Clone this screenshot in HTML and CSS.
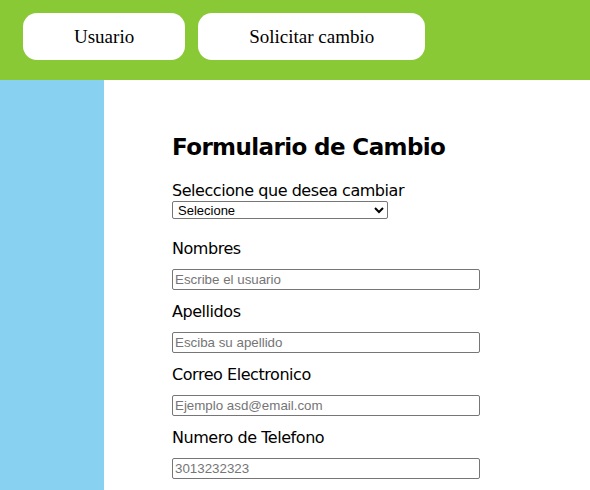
FILE: index.html
```html
<!DOCTYPE html>
<html lang="es">
<head>
<meta charset="utf-8">
<title>Formulario de Cambio</title>
<link rel="stylesheet" href="styles.css">
</head>
<body>
<header class="topbar">
  <a class="navbtn" href="#">Usuario</a>
  <a class="navbtn" href="#">Solicitar cambio</a>
</header>
<div class="layout">
  <aside class="sidebar"></aside>
  <main class="content">
    <h1 class="title">Formulario de Cambio</h1>
    <form class="form">
      <label class="label label-first" for="tipo">Seleccione que desea cambiar</label>
      <select class="select" id="tipo">
        <option>Selecione</option>
      </select>
      <label class="label" for="nom">Nombres</label>
      <input class="field" id="nom" type="text" placeholder="Escribe el usuario">
      <label class="label" for="ape">Apellidos</label>
      <input class="field" id="ape" type="text" placeholder="Esciba su apellido">
      <label class="label" for="mail">Correo Electronico</label>
      <input class="field" id="mail" type="email" placeholder="Ejemplo asd@email.com">
      <label class="label" for="tel">Numero de Telefono</label>
      <input class="field" id="tel" type="text" placeholder="3013232323">
    </form>
  </main>
</div>
</body>
</html>
```
FILE: styles.css
```css
html, body {
  margin: 0;
  padding: 0;
  height: 100%;
}
body {
  font-family: "DejaVu Sans", sans-serif;
  background: #ffffff;
  color: #000;
  display: flex;
  flex-direction: column;
}
.topbar {
  background: #8ac936;
  height: 80px;
  box-sizing: border-box;
  padding: 13px 23px 0;
  display: flex;
  align-items: flex-start;
  gap: 13px;
  flex-shrink: 0;
}
.navbtn {
  display: flex;
  align-items: center;
  justify-content: center;
  height: 47px;
  padding: 0 51px;
  background: #ffffff;
  border-radius: 14px;
  color: #000;
  text-decoration: none;
  font-family: "Liberation Serif", serif;
  font-size: 19px;
}
.layout {
  flex: 1;
  display: flex;
}
.sidebar {
  width: 104px;
  background: #89d1f1;
  flex-shrink: 0;
}
.content {
  flex: 1;
  padding: 53px 0 0 68px;
}
.title {
  margin: 0;
  font-size: 23px;
  letter-spacing: -0.6px;
  font-weight: bold;
  line-height: 28px;
}
.form {
  display: flex;
  flex-direction: column;
  align-items: flex-start;
}
.label {
  font-size: 16px;
  letter-spacing: -0.45px;
  line-height: 19px;
  margin-top: 12px;
}
.label-first {
  margin-top: 20px;
}
.select {
  width: 216px;
  height: 18px;
  box-sizing: border-box;
  font-family: "Liberation Sans", sans-serif;
  font-size: 13px;
  border: 1px solid #767676;
  border-radius: 2px;
  padding: 0 0 0 1px;
  margin: 1px 0 8px;
  background: #fff;
  color: #000;
}
.field {
  width: 308px;
  height: 21px;
  box-sizing: border-box;
  margin: 11px 0 0;
  padding: 1px 2px;
  border: 1px solid #767676;
  border-radius: 2px;
  font-family: "Liberation Sans", sans-serif;
  font-size: 13.33px;
}
.field::placeholder {
  color: #757575;
}
```
